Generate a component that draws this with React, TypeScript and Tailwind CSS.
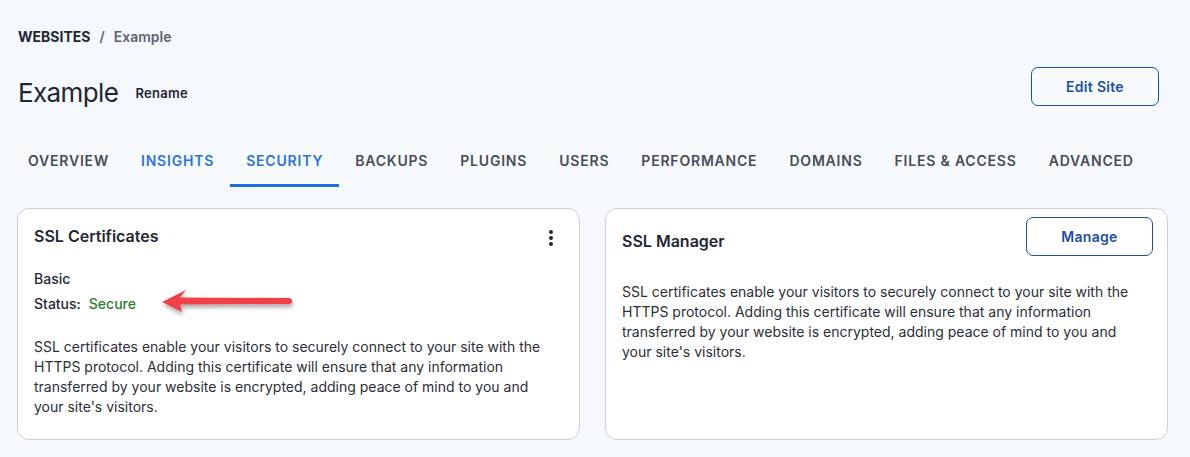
import React from "react";

const tabs = [
  "Overview",
  "Insights",
  "Security",
  "Backups",
  "Plugins",
  "Users",
  "Performance",
  "Domains",
  "Files & Access",
  "Advanced",
];

const body =
  "SSL certificates enable your visitors to securely connect to your site with the HTTPS protocol. Adding this certificate will ensure that any information transferred by your website is encrypted, adding peace of mind to you and your site's visitors.";

function Arrow() {
  return (
    <svg width="150" height="40" viewBox="0 0 150 40" className="absolute left-[134px] top-[75px]">
      <defs>
        <filter id="sh" x="-20%" y="-50%" width="140%" height="200%">
          <feDropShadow dx="1" dy="3" stdDeviation="2" floodColor="#000" floodOpacity="0.35" />
        </filter>
      </defs>
      <g filter="url(#sh)">
        <path d="M28 13.5 L137 14 Q140 14 140 17 Q140 20 137 20 L28 20.5 L30 28 L10 18 L34 6 Z" fill="#f2404a" />
      </g>
    </svg>
  );
}

function Dots() {
  return (
    <svg width="6" height="18" viewBox="0 0 6 18" className="text-[#1f2733]">
      <circle cx="3" cy="3" r="2" fill="currentColor" />
      <circle cx="3" cy="9" r="2" fill="currentColor" />
      <circle cx="3" cy="15" r="2" fill="currentColor" />
    </svg>
  );
}

export default function App() {
  return (
    <div
      className="w-[1190px] h-[457px] overflow-hidden bg-[#f5f8fc] text-[#1f2733]"
      style={{ fontFamily: "Inter, 'Noto Sans', sans-serif" }}
    >
      {/* Header */}
      <div className="px-[18px] pt-[27px]">
        <div className="flex items-center gap-[9px] text-[14px] leading-[20px] font-bold">
          <span className="text-[#1f2733]">WEBSITES</span>
          <span className="text-[#5d6470] font-semibold">/</span>
          <span className="text-[#5d6470] font-semibold">Example</span>
        </div>
        <div className="flex items-start justify-between pr-[13px] mt-[20px]">
          <div className="flex items-center gap-[17px] mt-[6px]">
            <h1 className="text-[26px] leading-[40px] font-normal tracking-[-0.6px] text-[#1f2733]">Example</h1>
            <button className="text-[13px] font-semibold tracking-[0.3px] text-[#1f2733] pt-[2px]">Rename</button>
          </div>
          <button className="w-[128px] h-[39px] rounded-[7px] border border-[#1d4fa3] text-[#1d4fa3] text-[14px] font-semibold tracking-[0.3px] bg-[#f8fbfe]">
            Edit Site
          </button>
        </div>
      </div>

      {/* Tabs */}
      <div className="mt-[8px] bg-[#f7fafd] pl-[12px] h-[66px] flex items-end">
        <div className="flex h-[54px]">
          {tabs.map((t) => {
            const active = t === "Security";
            const blue = t === "Security" || t === "Insights";
            return (
              <div
                key={t}
                className={
                  "px-[16px] pt-[3px] flex items-center uppercase text-[14px] font-semibold tracking-[0.8px] border-b-[3px] " +
                  (active ? "border-[#1f6fd8] " : "border-transparent ") +
                  (blue ? "text-[#2d72dc]" : "text-[#474d57]")
                }
              >
                {t}
              </div>
            );
          })}
        </div>
      </div>

      {/* Cards */}
      <div className="grid grid-cols-[563px_563px] gap-[25px] pl-[17px] mt-[21px]">
        <div className="relative h-[232px] bg-white border border-[#cdd1d6] rounded-[12px] px-[16px] pt-[16px]">
          <div className="flex items-start justify-between">
            <h2 className="text-[16px] leading-[22px] font-semibold text-[#1f2733]">SSL Certificates</h2>
            <div className="pt-[4px] pr-[9px]">
              <Dots />
            </div>
          </div>
          <div className="mt-[22px] text-[14px] leading-[20px] font-medium text-[#1f2733]">Basic</div>
          <div className="mt-[5px] text-[14px] leading-[20px] font-medium text-[#1f2733] flex gap-[8px]">
            <span>Status:</span>
            <span className="text-[#2e7d32]">Secure</span>
          </div>
          <p className="mt-[23px] text-[14px] leading-[20px] text-[#2b2f36] pr-[16px]">{body}</p>
          <Arrow />
        </div>

        <div className="h-[232px] bg-white border border-[#cdd1d6] rounded-[12px] pl-[16px] pr-[14px] pt-[8px]">
          <div className="flex items-center justify-between">
            <h2 className="text-[16px] leading-[22px] font-semibold text-[#1f2733] pt-[9px]">SSL Manager</h2>
            <button className="w-[127px] h-[39px] rounded-[7px] border border-[#1d4fa3] text-[#1d4fa3] text-[14px] font-semibold tracking-[0.3px]">
              Manage
            </button>
          </div>
          <p className="mt-[26px] text-[14px] leading-[20px] text-[#2b2f36] pr-[20px]">{body}</p>
        </div>
      </div>
    </div>
  );
}
